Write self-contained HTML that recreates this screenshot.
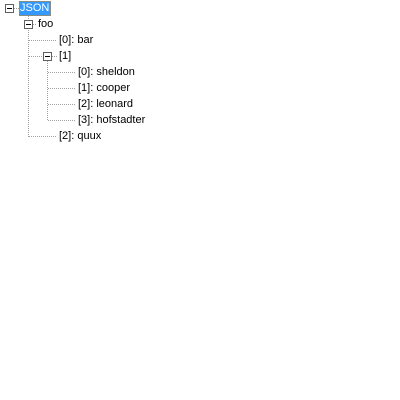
<!DOCTYPE html><html><head><style>
body{margin:0;width:400px;height:400px;background:#fff;position:relative;font-family:Tahoma,"Liberation Sans",sans-serif;font-size:11px;color:#000;overflow:hidden}
.t{position:absolute;line-height:14px;white-space:nowrap}
svg{position:absolute;left:0;top:0}
</style></head><body>
<svg width="400" height="400" shape-rendering="crispEdges">
<g stroke="#a0a0a0" stroke-width="1" stroke-dasharray="1,1" fill="none">
<line x1="14" y1="8.5" x2="19" y2="8.5"/>
<line x1="28.5" y1="16" x2="28.5" y2="19"/>
<line x1="33" y1="24.5" x2="37" y2="24.5"/>
<line x1="28.5" y1="28" x2="28.5" y2="137"/>
<line x1="29" y1="40.5" x2="57" y2="40.5"/>
<line x1="29" y1="56.5" x2="43" y2="56.5"/>
<line x1="52" y1="56.5" x2="57" y2="56.5"/>
<line x1="29" y1="136.5" x2="57" y2="136.5"/>
<line x1="47.5" y1="61" x2="47.5" y2="121"/>
<line x1="48" y1="72.5" x2="76" y2="72.5"/>
<line x1="48" y1="88.5" x2="76" y2="88.5"/>
<line x1="48" y1="104.5" x2="76" y2="104.5"/>
<line x1="48" y1="120.5" x2="76" y2="120.5"/>
</g>
<g stroke="#606060" fill="#fff">
<rect x="5.5" y="4.5" width="8" height="8"/>
<rect x="24.5" y="20.5" width="8" height="8"/>
<rect x="43.5" y="52.5" width="8" height="8"/>
</g>
<g stroke="#000">
<line x1="7" y1="8.5" x2="12" y2="8.5"/>
<line x1="26" y1="24.5" x2="31" y2="24.5"/>
<line x1="45" y1="56.5" x2="50" y2="56.5"/>
</g>
<rect x="19" y="1" width="32" height="15" fill="#3399ff"/>
<rect x="19.5" y="1.5" width="31" height="14" fill="none" stroke="#e08000" stroke-dasharray="1,1"/>
</svg>
<div class="t" style="left:20px;top:1px;color:#fff">JSON</div>
<div class="t" style="left:38px;top:17px">foo</div>
<div class="t" style="left:59px;top:33px">[0]: bar</div>
<div class="t" style="left:59px;top:49px">[1]</div>
<div class="t" style="left:78px;top:65px">[0]: sheldon</div>
<div class="t" style="left:78px;top:81px">[1]: cooper</div>
<div class="t" style="left:78px;top:97px">[2]: leonard</div>
<div class="t" style="left:78px;top:113px">[3]: hofstadter</div>
<div class="t" style="left:59px;top:129px">[2]: quux</div>
</body></html>
